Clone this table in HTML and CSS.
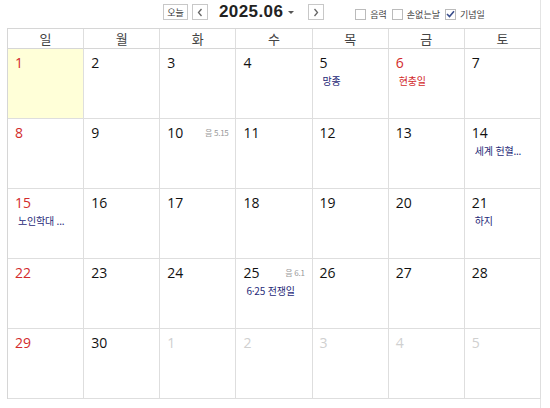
FILE: index.html
```html
<!DOCTYPE html>
<html lang="ko">
<head>
<meta charset="utf-8">
<link rel="stylesheet" href="styles.css">
</head>
<body>
<div class="wrap">
  <div class="toolbar">
    <div class="nav">
      <button class="btn today-btn">오늘</button>
      <button class="btn arrow"><svg width="8" height="9" viewBox="0 0 8 9"><path d="M5.5 1 L2.5 4.5 L5.5 8" fill="none" stroke="#666" stroke-width="1.3"/></svg></button>
      <span class="title">2025.06</span>
      <span class="caret"></span>
      <button class="btn arrow"><svg width="8" height="9" viewBox="0 0 8 9"><path d="M2.5 1 L5.5 4.5 L2.5 8" fill="none" stroke="#666" stroke-width="1.3"/></svg></button>
    </div>
    <div class="opts">
      <label class="opt"><span class="cb"></span>음력</label>
      <label class="opt"><span class="cb"></span>손없는날</label>
      <label class="opt"><span class="cb on"><svg width="9" height="8" viewBox="0 0 9 8"><path d="M1 4 L3.5 6.5 L8 1.2" fill="none" stroke="#3a4e8c" stroke-width="1.6"/></svg></span>기념일</label>
    </div>
  </div>
  <div class="cal">
    <div class="dow">일</div><div class="dow">월</div><div class="dow">화</div><div class="dow">수</div><div class="dow">목</div><div class="dow">금</div><div class="dow">토</div>

    <div class="cell todaycell"><div class="top"><span class="num sun">1</span></div></div>
    <div class="cell"><div class="top"><span class="num">2</span></div></div>
    <div class="cell"><div class="top"><span class="num">3</span></div></div>
    <div class="cell"><div class="top"><span class="num">4</span></div></div>
    <div class="cell"><div class="top"><span class="num">5</span></div><div class="ev">망종</div></div>
    <div class="cell"><div class="top"><span class="num sun">6</span></div><div class="ev hol">현충일</div></div>
    <div class="cell"><div class="top"><span class="num">7</span></div></div>

    <div class="cell"><div class="top"><span class="num sun">8</span></div></div>
    <div class="cell"><div class="top"><span class="num">9</span></div></div>
    <div class="cell"><div class="top"><span class="num">10</span><span class="lunar">음 5.15</span></div></div>
    <div class="cell"><div class="top"><span class="num">11</span></div></div>
    <div class="cell"><div class="top"><span class="num">12</span></div></div>
    <div class="cell"><div class="top"><span class="num">13</span></div></div>
    <div class="cell"><div class="top"><span class="num">14</span></div><div class="ev">세계 헌혈...</div></div>

    <div class="cell"><div class="top"><span class="num sun">15</span></div><div class="ev">노인학대 ...</div></div>
    <div class="cell"><div class="top"><span class="num">16</span></div></div>
    <div class="cell"><div class="top"><span class="num">17</span></div></div>
    <div class="cell"><div class="top"><span class="num">18</span></div></div>
    <div class="cell"><div class="top"><span class="num">19</span></div></div>
    <div class="cell"><div class="top"><span class="num">20</span></div></div>
    <div class="cell"><div class="top"><span class="num">21</span></div><div class="ev">하지</div></div>

    <div class="cell"><div class="top"><span class="num sun">22</span></div></div>
    <div class="cell"><div class="top"><span class="num">23</span></div></div>
    <div class="cell"><div class="top"><span class="num">24</span></div></div>
    <div class="cell"><div class="top"><span class="num">25</span><span class="lunar">음 6.1</span></div><div class="ev">6·25 전쟁일</div></div>
    <div class="cell"><div class="top"><span class="num">26</span></div></div>
    <div class="cell"><div class="top"><span class="num">27</span></div></div>
    <div class="cell"><div class="top"><span class="num">28</span></div></div>

    <div class="cell"><div class="top"><span class="num sun">29</span></div></div>
    <div class="cell"><div class="top"><span class="num">30</span></div></div>
    <div class="cell"><div class="top"><span class="num other">1</span></div></div>
    <div class="cell"><div class="top"><span class="num other">2</span></div></div>
    <div class="cell"><div class="top"><span class="num other">3</span></div></div>
    <div class="cell"><div class="top"><span class="num other">4</span></div></div>
    <div class="cell"><div class="top"><span class="num other">5</span></div></div>
  </div>
</div>
</body>
</html>
```
FILE: styles.css
```css
* { box-sizing: border-box; }
html, body { margin: 0; padding: 0; background: #fff; }
body {
  font-family: "Noto Sans", "Noto Sans CJK KR", sans-serif;
  color: #111;
  width: 550px;
  height: 408px;
  overflow: hidden;
}
.wrap {
  width: 541px;
  padding-left: 7px;
  border-right: 1px solid #e4e4e4;
  height: 408px;
}
.toolbar {
  height: 28px;
  display: flex;
  align-items: flex-start;
  padding-top: 3px;
  position: relative;
}
.nav {
  display: flex;
  align-items: center;
  margin-left: 156px;
  height: 18px;
}
.btn {
  font-family: "Noto Sans CJK KR", sans-serif;
  background: #fff;
  border: 1px solid #c8c8c8;
  height: 16px;
  padding: 0;
  margin: 0;
  display: flex;
  align-items: center;
  justify-content: center;
  color: #333;
}
.today-btn {
  width: 25px;
  font-size: 9px;
  line-height: 1;
}
.arrow {
  width: 16px;
  margin-left: 4px;
}
.title {
  font-family: "Liberation Sans", sans-serif;
  font-weight: bold;
  font-size: 17px;
  color: #222;
  margin-left: 11px;
  letter-spacing: 0.4px;
  line-height: 18px;
}
.caret {
  width: 0; height: 0;
  border-left: 3px solid transparent;
  border-right: 3px solid transparent;
  border-top: 3px solid #555;
  margin-left: 5px;
  margin-right: 10px;
}
.opts {
  display: flex;
  align-items: center;
  margin-left: 31px;
  height: 22px;
}
.opt {
  display: flex;
  align-items: center;
  font-family: "Noto Sans CJK KR", sans-serif;
  font-size: 9px;
  color: #444;
  margin-right: 5px;
}
.cb {
  width: 11px; height: 11px;
  border: 1px solid #bbb;
  background: #fff;
  margin-right: 4px;
  display: flex;
  align-items: center;
  justify-content: center;
}
.cal {
  display: grid;
  grid-template-columns: repeat(7, 1fr);
  grid-template-rows: 20px repeat(5, 70px);
  border-top: 1px solid #d6d6d6;
  border-left: 1px solid #d6d6d6;
  width: 534px;
}
.dow {
  border-right: 1px solid #dedede;
  border-bottom: 1px solid #d6d6d6;
  text-align: center;
  font-family: "Noto Sans CJK KR", sans-serif;
  font-size: 13px;
  line-height: 19px;
  color: #444;
}
.cell {
  border-right: 1px solid #dedede;
  border-bottom: 1px solid #dedede;
  padding: 5px 7px 0 7px;
}
.todaycell {
  background: #ffffd8;
}
.top {
  display: flex;
  justify-content: space-between;
  align-items: center;
  height: 17px;
}
.num {
  font-family: "Open Sans", "Noto Sans", sans-serif;
  font-size: 14px;
  color: #111;
  line-height: 17px;
}
.num.sun { color: #d22b2b; }
.num.other { color: #d0d0d0; }
.lunar {
  font-family: "Noto Sans CJK KR", sans-serif;
  font-size: 8px;
  color: #999;
  letter-spacing: -0.3px;
}
.ev {
  font-family: "Noto Sans CJK KR", sans-serif;
  font-size: 10px;
  color: #1f2a78;
  margin-top: 2px;
  padding-left: 3px;
  white-space: nowrap;
  letter-spacing: -0.2px;
}
.ev.hol { color: #d22b2b; }
```
